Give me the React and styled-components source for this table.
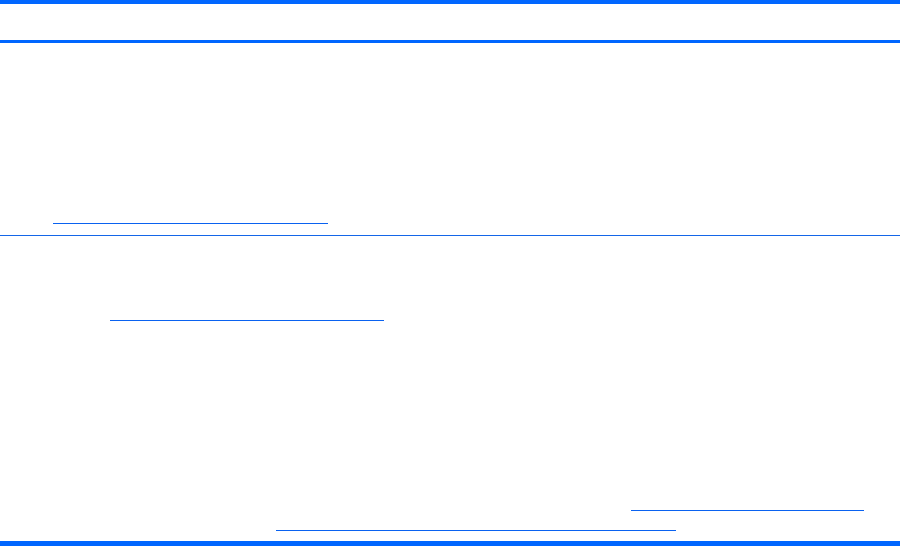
import styled, { createGlobalStyle } from 'styled-components';

const GlobalStyle = createGlobalStyle`
    html, body {
        margin: 0;
        padding: 0;
        background: #ffffff;
        font-family: "Liberation Sans", Arial, sans-serif;
    }
`;

const links = [
    { top: 84, left: 110, width: 274 },
    { top: 189, left: 631, width: 233 },
    { top: 19, left: 276, width: 400 },
];

export default function App() {
    return (
        <>
            <GlobalStyle />
            <Page>
                <Bar size={4} />
                <Header />
                <Bar size={3} />
                <Section pad={180} bottom={11}>
                    <LinkLine left={53} width={275} />
                </Section>
                <Rule />
                <Body>
                    {links.map(({ top, left, width }) => (
                        <LinkLine key={`${top}-${left}`} top={top} left={left} width={width} />
                    ))}
                </Body>
                <Bar size={5} />
            </Page>
        </>
    );
}

const Page = styled.div`
    width: 900px;
    height: 546px;
    display: flex;
    flex-direction: column;
    background: #ffffff;
    overflow: hidden;
`;

const Bar = styled.div`
    height: ${({ size }) => size}px;
    width: 100%;
    background: #0066ff;
    flex-shrink: 0;
`;

const Header = styled.div`
    height: 36px;
    flex-shrink: 0;
`;

const Section = styled.div`
    padding-top: ${({ pad }) => pad}px;
    padding-bottom: ${({ bottom }) => bottom}px;
    display: flex;
    flex-direction: column;
    flex-shrink: 0;
`;

const Rule = styled.div`
    height: 1px;
    width: 100%;
    background: #1466e8;
    flex-shrink: 0;
`;

const Body = styled.div`
    flex: 1;
    display: flex;
    flex-direction: column;
`;

const LinkLine = styled.span`
    display: block;
    height: 1px;
    margin-top: ${({ top }) => top || 0}px;
    margin-left: ${({ left }) => left}px;
    width: ${({ width }) => width}px;
    background: #0a62f0;
`;
